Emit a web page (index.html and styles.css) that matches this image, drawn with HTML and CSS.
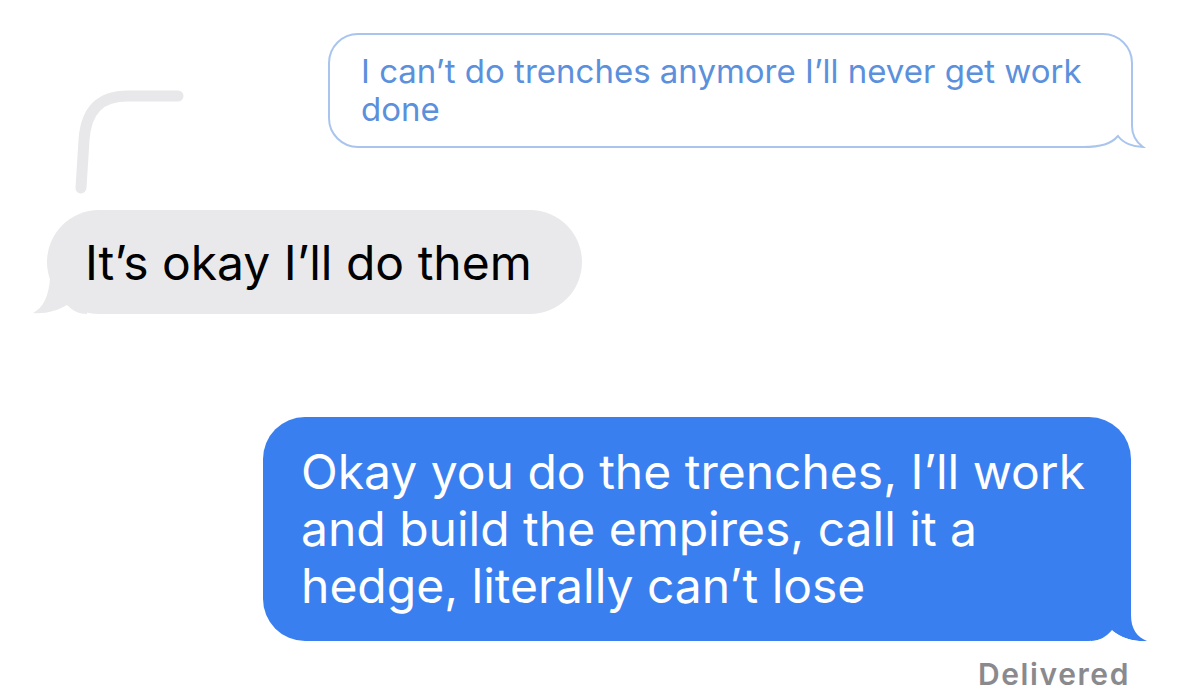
FILE: index.html
```html
<!DOCTYPE html>
<html lang="en">
<head>
  <title>Messages</title>
  <meta charset="utf-8">
  <link rel="stylesheet" href="styles.css">
</head>
<body>
  <div class="chat">
    <div class="thread">
      <div class="bubble quoted">
        I can’t do trenches anymore I’ll never get work done
        <svg class="tail tail-quoted" width="70" height="60" viewBox="0 0 70 60">
          <rect x="0" y="0" width="70" height="60" fill="#fff"/>
          <path d="M0 55 C18 55 28 52 35 44 C40 51 50 55 60 55 C53 50 49 44 49 34 L49 0" fill="#fff" stroke="#a9c5ee" stroke-width="2"/>
        </svg>
      </div>

      <svg class="reply-line" width="120" height="110" viewBox="0 0 120 110">
        <path d="M108 8 L58 8 C30 8 16 22 14 52 L11 100" fill="none" stroke="#e8e8ea" stroke-width="11" stroke-linecap="round"/>
      </svg>

      <div class="bubble received">
        It’s okay I’ll do them
        <svg class="tail tail-received" width="60" height="60" viewBox="0 0 60 60">
          <path d="M30 0 L23 0 L23 20 C22 38 16 50 6 55 C18 56 30 53 40 47 C46 53 52 56 60 56 L60 0 Z" fill="#e9e9eb"/>
        </svg>
      </div>
    </div>

    <div class="bubble sent">
      Okay you do the trenches, I’ll work and build the empires, call it a hedge, literally can’t lose
      <svg class="tail tail-sent" width="60" height="60" viewBox="0 0 60 60">
        <path d="M0 0 L40 0 L40 30 C40 44 46 52 56 56 C46 57 30 54 21 45 C15 52 8 56 0 56 Z" fill="#3a7ff0"/>
        <path d="M0 56 C8 56 15 52 21 45 C30 54 46 57 56 56 L60 56 L60 60 L0 60 Z" fill="#fff"/>
      </svg>
    </div>

    <div class="status">Delivered</div>
  </div>
</body>
</html>
```

FILE: styles.css
```css
body {
  margin: 0;
  background-color: #fff;
  font-family: Inter, Roboto, "Liberation Sans", sans-serif;
}
.chat {
  display: flex;
  flex-flow: column nowrap;
  padding-top: 33px;
}
.thread {
  position: relative;
  display: flex;
  flex-flow: column nowrap;
}
.bubble {
  position: relative;
  box-sizing: border-box;
}
.tail {
  position: absolute;
  display: block;
}

/* quoted message (outlined) */
.quoted {
  align-self: flex-end;
  width: 805px;
  height: 115px;
  margin-right: 46px;
  padding: 17px 30px 0 31px;
  border: 2px solid #a9c5ee;
  border-radius: 30px;
  color: #5b90dc;
  font-size: 33px;
  line-height: 38px;
}
.tail-quoted {
  right: -22px;
  bottom: -6px;
}

.reply-line {
  position: absolute;
  left: 70px;
  top: 55px;
}

/* grey incoming bubble */
.received {
  align-self: flex-start;
  display: flex;
  align-items: center;
  height: 104px;
  margin: 62px 0 0 47px;
  padding: 0 50px 0 38px;
  border-radius: 52px;
  background-color: #e9e9eb;
  color: #000;
  font-size: 48px;
}
.tail-received {
  left: -20px;
  bottom: -4px;
}

/* blue outgoing bubble */
.sent {
  align-self: flex-end;
  width: 868px;
  height: 224px;
  margin: 103px 48px 0 0;
  padding: 26px 40px 0 38px;
  border-radius: 42px;
  background-color: #3a7ff0;
  color: #fff;
  font-size: 48px;
  line-height: 57px;
}
.tail-sent {
  right: -20px;
  bottom: -4px;
}

.status {
  align-self: flex-end;
  margin: 15px 49px 0 0;
  color: #8a8a8e;
  font-size: 30px;
  font-weight: 600;
  letter-spacing: 1.6px;
}
```
